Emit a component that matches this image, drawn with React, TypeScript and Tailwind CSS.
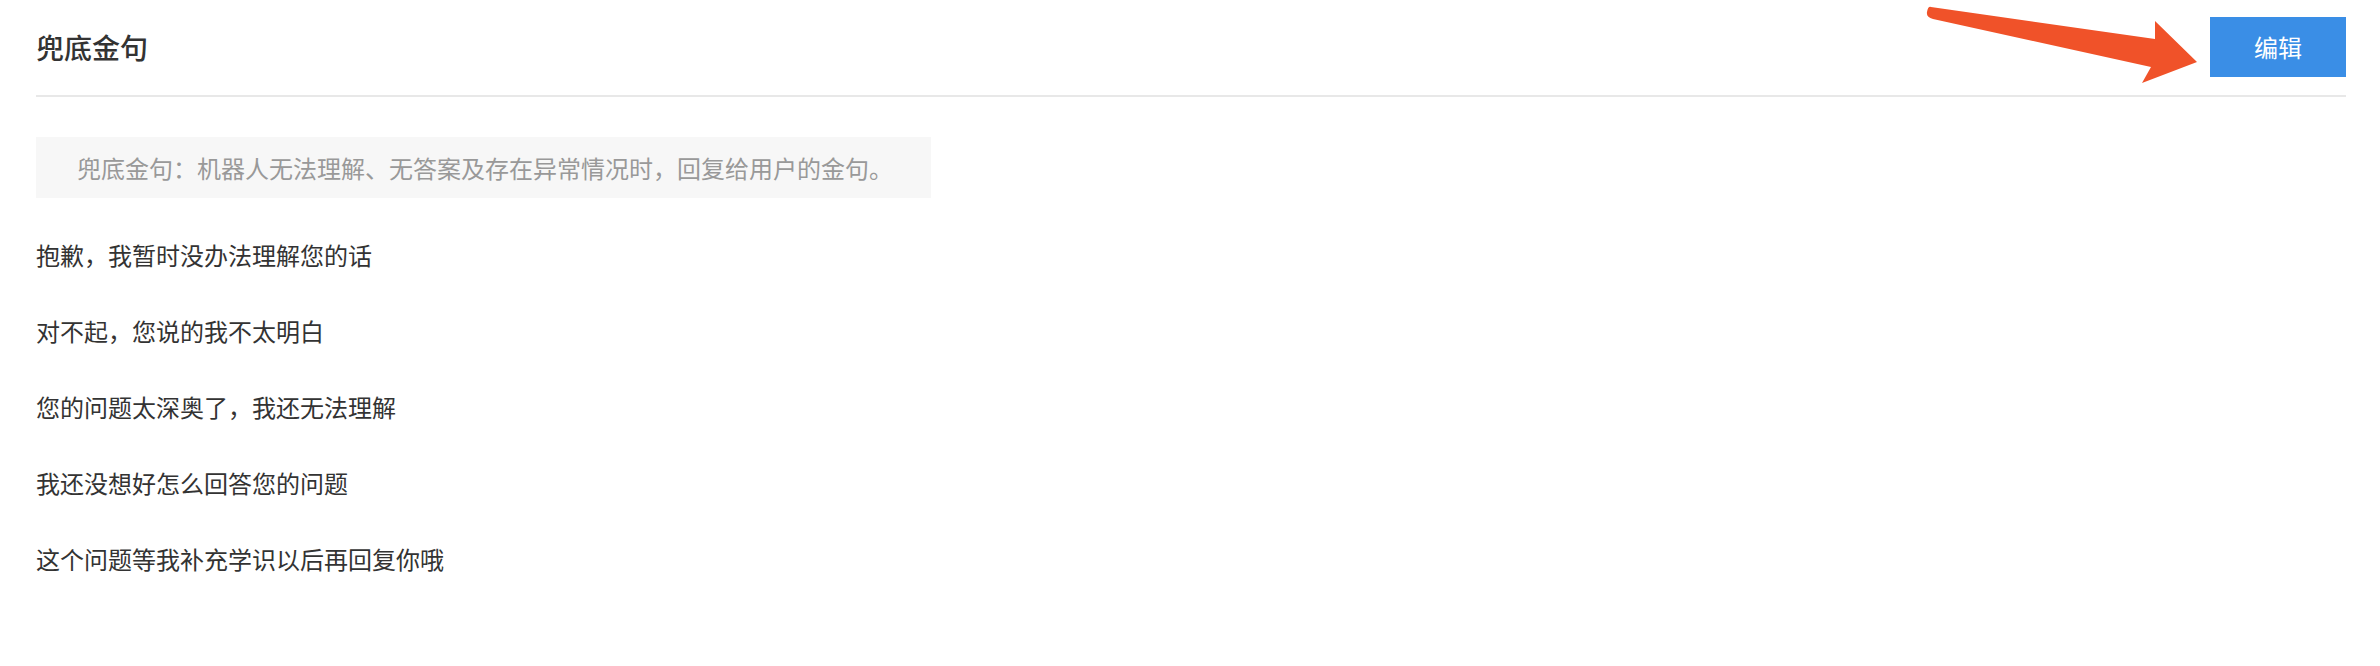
import React from "react";

const rows = [
  "抱歉，我暂时没办法理解您的话",
  "对不起，您说的我不太明白",
  "您的问题太深奥了，我还无法理解",
  "我还没想好怎么回答您的问题",
  "这个问题等我补充学识以后再回复你哦",
];

export default function App() {
  return (
    <div
      className="relative w-[2380px] h-[666px] bg-white pl-[36px] pr-[34px]"
      style={{ fontFamily: '"Noto Sans CJK SC", "Noto Sans", sans-serif' }}
    >
      <div className="flex h-[97px] items-center justify-between border-b-2 border-[#e8e8e8] pb-[2px]">
        <h1 className="text-[28px] font-medium leading-none text-[#333333]">兜底金句</h1>
        <button className="flex h-[60px] w-[136px] items-center justify-center bg-[#3a8ee6] text-[24px] leading-none text-white">
          编辑
        </button>
      </div>

      <div className="mt-[40px] inline-flex h-[61px] items-center bg-[#f7f7f7] pl-[41px] pr-[38px] text-[24px] leading-none text-[#999999]">
        兜底金句：机器人无法理解、无答案及存在异常情况时，回复给用户的金句。
      </div>

      <div className="mt-[19px] flex flex-col">
        {rows.map((r) => (
          <div key={r} className="flex h-[76px] items-center text-[24px] leading-none text-[#333333]">
            {r}
          </div>
        ))}
      </div>

      <svg
        className="absolute left-0 top-0 pointer-events-none"
        width="2380"
        height="100"
        viewBox="0 0 2380 100"
      >
        <path
          d="M1931,7 L2155,39 L2155,21 L2197,62 L2142,83 L2151,67 L1933,19 Q1926,17 1927,12 Q1928,6 1931,7 Z"
          fill="#f05229"
          strokeLinejoin="round"
        />
      </svg>
    </div>
  );
}
